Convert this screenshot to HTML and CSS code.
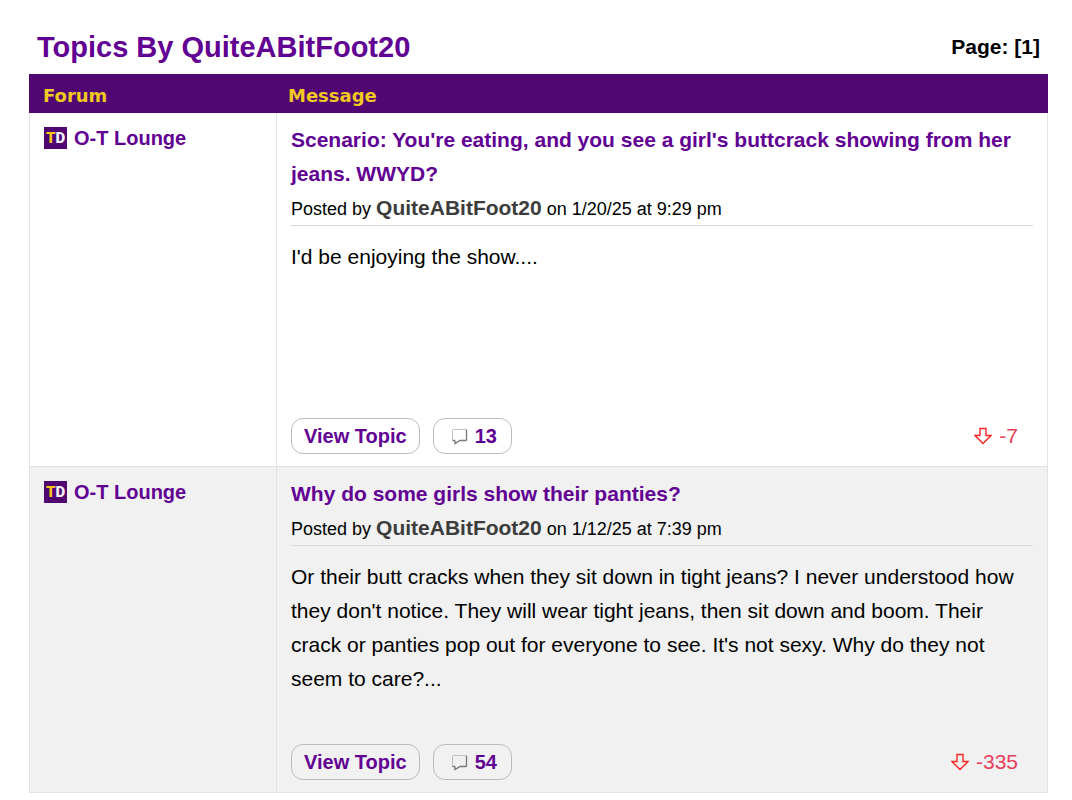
FILE: index.html
```html
<!DOCTYPE html>
<html lang="en">

<head>
    <meta charset="UTF-8">
    <meta name="viewport" content="width=device-width, initial-scale=1.0">
    <title>Topics By QuiteABitFoot20</title>
    <link rel="stylesheet" href="styles.css">
</head>

<body>
    <!-- shared icons -->
    <svg class="sprite" aria-hidden="true">
        <symbol id="icon-bubble" viewBox="0 0 18 18">
            <path d="M2.5 13.5V3L3 2.5H16" fill="none" stroke="#c0c0c0" />
            <path d="M16.5 2.5V13L15.5 13.5H10L5 16.5V14L4.5 13.5H2.5" fill="none" stroke="#777" stroke-width="1.3" />
        </symbol>
        <symbol id="icon-down" viewBox="0 0 18 18">
            <path d="M6 1.5H12V8.5H17L9 16.5L1 8.5H6Z" fill="none" stroke="#f22" stroke-width="1.4" />
        </symbol>
    </svg>

    <div class="container">
        <header class="top">
            <h1>Topics By QuiteABitFoot20</h1>
            <div class="page">Page: [1]</div>
        </header>

        <table class="topics">
            <thead>
                <tr>
                    <th class="forum">Forum</th>
                    <th>Message</th>
                </tr>
            </thead>
            <tbody>
                <tr>
                    <td class="forum">
                        <a href="#" class="forum-link"><span class="logo"><span class="t">T</span>D</span>O-T Lounge</a>
                    </td>
                    <td class="message">
                        <a href="#" class="title">Scenario: You're eating, and you see a girl's buttcrack showing from her jeans. WWYD?</a>
                        <div class="posted">Posted by <a href="#" class="user">QuiteABitFoot20</a> on 1/20/25 at 9:29 pm</div>
                        <p class="text">I'd be enjoying the show....</p>
                        <div class="actions">
                            <button type="button">View Topic</button>
                            <button type="button" class="replies"><svg class="icon"><use href="#icon-bubble" /></svg>13</button>
                            <span class="votes"><svg class="icon"><use href="#icon-down" /></svg>-7</span>
                        </div>
                    </td>
                </tr>
                <tr>
                    <td class="forum">
                        <a href="#" class="forum-link"><span class="logo"><span class="t">T</span>D</span>O-T Lounge</a>
                    </td>
                    <td class="message">
                        <a href="#" class="title">Why do some girls show their panties?</a>
                        <div class="posted">Posted by <a href="#" class="user">QuiteABitFoot20</a> on 1/12/25 at 7:39 pm</div>
                        <p class="text">Or their butt cracks when they sit down in tight jeans? I never understood how they don't notice. They will wear tight jeans, then sit down and boom. Their crack or panties pop out for everyone to see. It's not sexy. Why do they not seem to care?...</p>
                        <div class="actions">
                            <button type="button">View Topic</button>
                            <button type="button" class="replies"><svg class="icon"><use href="#icon-bubble" /></svg>54</button>
                            <span class="votes"><svg class="icon"><use href="#icon-down" /></svg>-335</span>
                        </div>
                    </td>
                </tr>
            </tbody>
        </table>
    </div>
</body>

</html>
```
FILE: styles.css
```css
body {
    font-family: "Liberation Sans", Arial, sans-serif;
    font-size: 21px;
    line-height: 34px;
    color: #000;
    background: white;
    margin: 0;
}

a {
    color: #610093;
    text-decoration: none;
}

.sprite {
    display: none;
}

.container {
    padding: 20px 24px 0 29px;
}

.top {
    display: flex;
    justify-content: space-between;
    align-items: center;
    height: 54px;
    padding: 0 8px;
}

h1 {
    margin: 0;
    font-size: 29px;
    color: #610093;
}

.page {
    font-weight: bold;
}

.topics {
    width: 100%;
    border-collapse: separate;
    border-spacing: 0;
}

th {
    height: 39px;
    padding: 5px 11px 0;
    box-sizing: border-box;
    background: #500771;
    color: #f1c81f;
    font-family: "DejaVu Sans", Verdana, sans-serif;
    font-size: 18px;
    text-align: left;
}

td {
    padding: 10px 14px 12px;
    vertical-align: top;
    border-right: 1px solid #e2e2e2;
    border-bottom: 1px solid #e2e2e2;
}

.forum {
    width: 248px;
    box-sizing: border-box;
    padding-left: 14px;
}

td.forum {
    padding-top: 8px;
    border-left: 1px solid #e2e2e2;
}

tbody tr:nth-child(even) {
    background: #f1f1f1;
}

.forum-link {
    display: flex;
    align-items: center;
    gap: 7px;
    font-size: 20px;
    font-weight: bold;
}

.logo {
    width: 23px;
    height: 22px;
    background: #500771;
    color: #f4eef8;
    font-family: Roboto, "Liberation Sans", sans-serif;
    font-size: 15px;
    font-weight: 900;
    line-height: 23px;
    text-align: center;
}

.logo .t {
    color: #f5c51c;
}

.title {
    display: block;
    font-weight: bold;
}

.posted {
    height: 34px;
    font-size: 18px;
    border-bottom: 1px solid #d9d9d9;
}

.user {
    color: #3c3c3c;
    font-size: 21px;
    font-weight: bold;
}

.text {
    min-height: 130px;
    margin: 14px 0 48px;
}

.actions {
    display: flex;
    align-items: center;
    gap: 13px;
}

button {
    display: flex;
    align-items: center;
    gap: 7px;
    height: 36px;
    padding: 0 12px;
    background: none;
    border: 1px solid #bbb;
    border-radius: 12px;
    color: #610093;
    font-family: inherit;
    font-size: 20px;
    font-weight: bold;
    cursor: pointer;
}

.replies {
    padding-left: 16px;
    padding-right: 14px;
}

.icon {
    width: 18px;
    height: 18px;
}

.votes {
    display: flex;
    align-items: center;
    gap: 7px;
    margin-left: auto;
    padding-right: 15px;
    color: #e5405a;
}
```
